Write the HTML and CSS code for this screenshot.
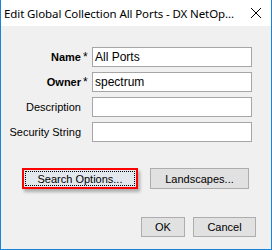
FILE: index.html
```html
<html lang="en">
<head>
  <meta charset="UTF-8">
  <title>Edit Global Collection All Ports</title>
  <link rel="stylesheet" href="styles.css">
</head>
<body>
  <div class="window">
    <div class="titlebar">
      <span class="title">Edit Global Collection All Ports - DX NetOp...</span>
      <svg class="close" width="12" height="12" viewBox="0 0 12 12">
        <path d="M1 1 L11 11 M11 1 L1 11" stroke="#000" stroke-width="1" fill="none"/>
      </svg>
    </div>
    <div class="content">
      <div class="form">
        <label class="label bold">Name</label><span class="req">*</span>
        <input class="field" type="text" value="All Ports">
        <label class="label bold">Owner</label><span class="req">*</span>
        <input class="field" type="text" value="spectrum">
        <label class="label">Description</label><span class="req"></span>
        <input class="field" type="text" value="">
        <label class="label">Security String</label><span class="req"></span>
        <input class="field" type="text" value="">
      </div>
      <div class="options">
        <button class="btn focused"><span class="focus-ring">Search Options...</span></button>
        <button class="btn landscapes">Landscapes...</button>
      </div>
      <div class="actions">
        <button class="btn ok">OK</button>
        <button class="btn cancel">Cancel</button>
      </div>
    </div>
  </div>
</body>
</html>
```

FILE: styles.css
```css
html, body {
  margin: 0;
  padding: 0;
  width: 272px;
  height: 250px;
  overflow: hidden;
}
body {
  font-family: "Liberation Sans", Arial, sans-serif;
  font-size: 11px;
  color: #000;
  background-color: #fff;
}
.window {
  box-sizing: border-box;
  width: 272px;
  height: 250px;
  border: 1px solid #1883d7;
  border-top: none;
  display: flex;
  flex-direction: column;
}
.titlebar {
  height: 26px;
  background-color: #fff;
  display: flex;
  align-items: center;
  padding-left: 3px;
}
.title {
  font-family: "Noto Sans", sans-serif;
  font-size: 11.5px;
  letter-spacing: -0.1px;
  white-space: nowrap;
  flex: 1;
}
.close {
  margin-right: 9px;
  margin-left: 4px;
}
.content {
  flex: 1;
  background-color: #f0f0f0;
  display: flex;
  flex-direction: column;
}
.form {
  display: grid;
  grid-template-columns: 80px 11px 160px;
  grid-auto-rows: 20px;
  row-gap: 5px;
  margin-top: 21px;
}
.label {
  text-align: right;
  align-self: center;
  white-space: nowrap;
}
.bold {
  font-weight: bold;
}
.req {
  align-self: center;
  padding-left: 2px;
  font-size: 12px;
}
.field {
  box-sizing: border-box;
  width: 160px;
  height: 20px;
  margin: 0;
  border: 1px solid #a6a6a6;
  background-color: #fff;
  font-family: "Liberation Sans", Arial, sans-serif;
  font-size: 12px;
  padding: 0 2px;
  outline: none;
}
.options {
  display: flex;
  gap: 12px;
  margin-top: 26px;
  padding-left: 21px;
}
.btn {
  box-sizing: border-box;
  height: 21px;
  margin: 0;
  padding: 0;
  border: 1px solid #adadad;
  background-color: #e1e1e1;
  font-family: "Liberation Sans", Arial, sans-serif;
  font-size: 11px;
  color: #000;
}
.focused {
  width: 116px;
  border: 2px solid #ff0000;
  background-color: #e3e8ee;
  box-shadow: 2px 3px 3px rgba(0, 0, 0, 0.28);
  padding: 1px;
}
.focus-ring {
  display: flex;
  align-items: center;
  justify-content: center;
  height: 100%;
  box-sizing: border-box;
  border: 1px dotted #000;
}
.landscapes {
  width: 99px;
}
.actions {
  display: flex;
  justify-content: flex-end;
  gap: 8px;
  margin-top: 28px;
  padding-right: 15px;
}
.ok {
  width: 44px;
  height: 20px;
}
.cancel {
  width: 63px;
  height: 20px;
}
```
